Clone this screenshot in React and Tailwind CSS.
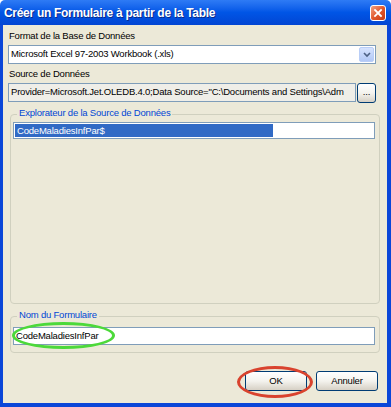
import React from "react";

const font = { fontFamily: '"Liberation Sans", Arial, sans-serif' };

function XpButton({ children, className = "" }) {
  return (
    <div
      className={
        "flex items-center justify-center h-[20px] rounded-[3px] border border-[#003C74] bg-gradient-to-b from-[#FFFFFF] via-[#F4F3EE] to-[#D6D0C5] text-[9.5px] tracking-[-0.2px] text-black " +
        className
      }
    >
      {children}
    </div>
  );
}

export default function App() {
  return (
    <div className="relative w-[391px] h-[407px] flex flex-col bg-white" style={font}>
      {/* Title bar */}
      <div className="h-[25px] flex items-center justify-between pl-[4px] pr-[5px] rounded-t-[5px] bg-gradient-to-b from-[#2E7BF5] via-[#0055E6] to-[#0245D3] shrink-0">
        <span className="text-white font-bold text-[12px] tracking-[-0.3px] [text-shadow:1px_1px_0_#0A2A8A]">
          Créer un Formulaire à partir de la Table
        </span>
        <div className="w-[16px] h-[16px] rounded-[3px] border border-white bg-gradient-to-br from-[#F0A080] via-[#E2582C] to-[#C63A12] flex items-center justify-center">
          <svg width="10" height="10" viewBox="0 0 10 10">
            <path d="M2 2 L8 8 M8 2 L2 8" stroke="white" strokeWidth="1.8" strokeLinecap="square" />
          </svg>
        </div>
      </div>

      {/* Body */}
      <div className="flex-1 flex flex-col bg-[#ECE9D8] border-l-[3px] border-r-[4px] border-b-[4px] border-[#0A46D8] pl-[5px] pr-[7px] text-[9.5px] tracking-[-0.2px]">
        <div className="mt-[5px] h-[12px] leading-[12px] text-black pl-[1px]">
          Format de la Base de Données
        </div>
        <div className="mt-[3px] mr-[4px] h-[19px] flex items-stretch bg-white border border-[#7F9DB9]">
          <div className="flex-1 flex items-center pl-[2px] text-black">
            Microsoft Excel 97-2003 Workbook (.xls)
          </div>
          <div className="w-[15px] m-[1px] rounded-[2px] bg-gradient-to-b from-[#D6E3FE] to-[#B2C8F6] border border-[#B9CEF7] flex items-center justify-center">
            <svg width="8" height="6" viewBox="0 0 8 6">
              <path d="M1 1 L4 4 L7 1" stroke="#4D6185" strokeWidth="1.6" fill="none" />
            </svg>
          </div>
        </div>
        <div className="mt-[4px] h-[12px] leading-[12px] text-black pl-[1px]">
          Source de Données
        </div>
        <div className="mt-[3px] mr-[4px] h-[19px] flex gap-[1px]">
          <div className="flex-1 min-w-0 flex items-center pl-[2px] bg-[#EFEEE8] border border-[#7F9DB9] text-black overflow-hidden whitespace-nowrap">
            Provider=Microsoft.Jet.OLEDB.4.0;Data Source="C:\Documents and Settings\Adm
          </div>
          <XpButton className="w-[19px] h-[19px] shrink-0 rounded-[2px] items-end pb-[3px]">...</XpButton>
        </div>

        {/* Group 1 */}
        <fieldset className="mt-[5px] ml-[2px] h-[197px] border border-[#D0D0BF] rounded-[4px] pl-[2px] pr-[4px] pb-[7px] flex flex-col">
          <legend className="ml-[4px] px-[2px] leading-[12px] text-[#0046D5] pb-[3px]">
            Explorateur de la Source de Données
          </legend>
          <div className="flex-1 bg-white border border-[#7F9DB9] p-[1px]">
            <div className="w-[258px] h-[13px] bg-[#316AC5] text-white leading-[13px] pl-[2px]">
              CodeMaladiesInfPar$
            </div>
          </div>
        </fieldset>

        {/* Group 2 */}
        <fieldset className="mt-[5px] ml-[2px] h-[44px] border border-[#D0D0BF] rounded-[4px] pl-[2px] pr-[4px] pb-[7px] flex flex-col">
          <legend className="ml-[4px] px-[2px] leading-[12px] text-[#0046D5] pb-[3px]">
            Nom du Formulaire
          </legend>
          <div className="mt-[3px] h-[18px] bg-white border border-[#7F9DB9] flex items-center pl-[2px] text-black">
            CodeMaladiesInfPar
          </div>
        </fieldset>

        {/* Buttons */}
        <div className="mt-[18px] flex justify-end gap-[9px] pr-[2px]">
          <XpButton className="w-[62px]">OK</XpButton>
          <XpButton className="w-[62px]">Annuler</XpButton>
        </div>
      </div>

      {/* Annotation ellipses */}
      <div className="absolute left-[12px] top-[322px] w-[103px] h-[27px] rounded-[50%] border-[3px] border-[#4CD93A] pointer-events-none" />
      <div className="absolute left-[237px] top-[366px] w-[76px] h-[32px] rounded-[50%] border-[3px] border-[#D9432E] pointer-events-none" />
    </div>
  );
}
